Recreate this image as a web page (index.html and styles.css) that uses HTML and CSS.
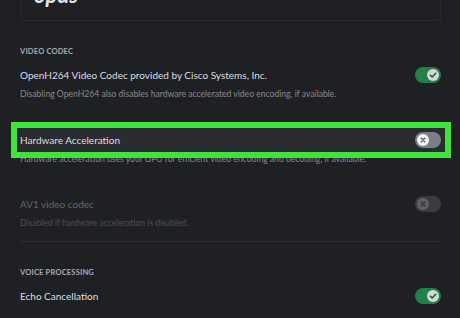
FILE: index.html
```html
<html>
<head>
<title>Voice &amp; Video Settings</title>
<link rel="stylesheet" href="styles.css">
</head>
<body>

<div id="content">
  <div class="codec-card"><span class="codec-logo">opus</span></div>

  <div class="section-header">Video Codec</div>

  <div class="setting">
    <div class="setting-title">
      <span>OpenH264 Video Codec provided by Cisco Systems, Inc.</span>
      <span class="toggle on"><span class="knob">
        <svg viewBox="0 0 12 12"><path d="M3.4 6.2 5.2 8 8.7 4.3" /></svg>
      </span></span>
    </div>
    <div class="setting-desc">Disabling OpenH264 also disables hardware accelerated video encoding, if available.</div>
  </div>

  <div class="setting">
    <div class="setting-title highlight">
      <span>Hardware Acceleration</span>
      <span class="toggle"><span class="knob">
        <svg viewBox="0 0 12 12"><path d="M4.3 4.3 7.7 7.7M7.7 4.3 4.3 7.7" /></svg>
      </span></span>
    </div>
    <div class="setting-desc">Hardware acceleration uses your GPU for efficient video encoding and decoding, if available.</div>
  </div>

  <div class="setting disabled">
    <div class="setting-title">
      <span>AV1 video codec</span>
      <span class="toggle"><span class="knob">
        <svg viewBox="0 0 12 12"><path d="M4.3 4.3 7.7 7.7M7.7 4.3 4.3 7.7" /></svg>
      </span></span>
    </div>
    <div class="setting-desc">Disabled if hardware acceleration is disabled.</div>
  </div>

  <div class="divider"></div>

  <div class="section-header">Voice Processing</div>

  <div class="setting">
    <div class="setting-title">
      <span>Echo Cancellation</span>
      <span class="toggle on"><span class="knob">
        <svg viewBox="0 0 12 12"><path d="M3.4 6.2 5.2 8 8.7 4.3" /></svg>
      </span></span>
    </div>
  </div>
</div>

</body>
</html>
```

FILE: styles.css
```css
body {
  margin:0;
  background:#1f2023;
  font-family:Lato, "Noto Sans", sans-serif;
  color:#dbdee1;
  overflow:hidden;
}

#content {
  width:421px;
  padding-left:20px;
}

.codec-card {
  margin-left:1px;
  height:20px;
  border:1px solid #2a2b2f;
  border-top:none;
  border-radius:0 0 4px 4px;
  overflow:hidden;
}

.codec-logo {
  display:block;
  margin:-18px 0 0 12px;
  font-size:22px;
  line-height:26px;
  font-weight:bold;
  font-style:italic;
  color:#e4e5e8;
}

.section-header {
  margin-top:24px;
  font-size:7.5px;
  line-height:14px;
  font-weight:bold;
  text-transform:uppercase;
  letter-spacing:0.2px;
  color:#a8abb1;
}

.section-header + .setting {
  margin-top:6px;
}

.setting {
  margin-top:28px;
}

.setting + .setting.disabled {
  margin-top:27px;
}

.setting-title {
  position:relative;
  display:flex;
  justify-content:space-between;
  align-items:center;
  height:20px;
  font-size:10px;
}

.setting-title span {
  position:relative;
  z-index:1;
}

.setting-desc {
  margin-top:1px;
  font-size:8.6px;
  line-height:16px;
  color:#868990;
}

.highlight::before {
  content:"";
  position:absolute;
  top:-8px;
  bottom:-8px;
  left:-9px;
  right:-10px;
  border:6px solid #40e33c;
  background:#2b2c31;
  z-index:0;
}

.toggle {
  display:flex;
  align-items:center;
  width:26px;
  height:16px;
  padding:0 2px;
  box-sizing:border-box;
  border-radius:8px;
  background:#7c7f87;
}

.toggle.on {
  justify-content:flex-end;
  background:#23804a;
}

.knob {
  display:flex;
  width:12px;
  height:12px;
  border-radius:50%;
  background:#f2f3f5;
}

.toggle.on .knob {
  background:#d5d8d6;
}

.knob svg {
  width:12px;
  height:12px;
  fill:none;
  stroke:#5c5f66;
  stroke-width:1.6;
  stroke-linecap:round;
  stroke-linejoin:round;
}

.toggle.on .knob svg {
  stroke:#1e5a37;
}

.disabled .setting-title {
  color:#65676d;
}

.disabled .setting-desc {
  color:#4d4f55;
}

.disabled .toggle {
  opacity:0.3;
}

.divider {
  margin-top:10px;
  height:1px;
  background:#2d2e33;
}
```
